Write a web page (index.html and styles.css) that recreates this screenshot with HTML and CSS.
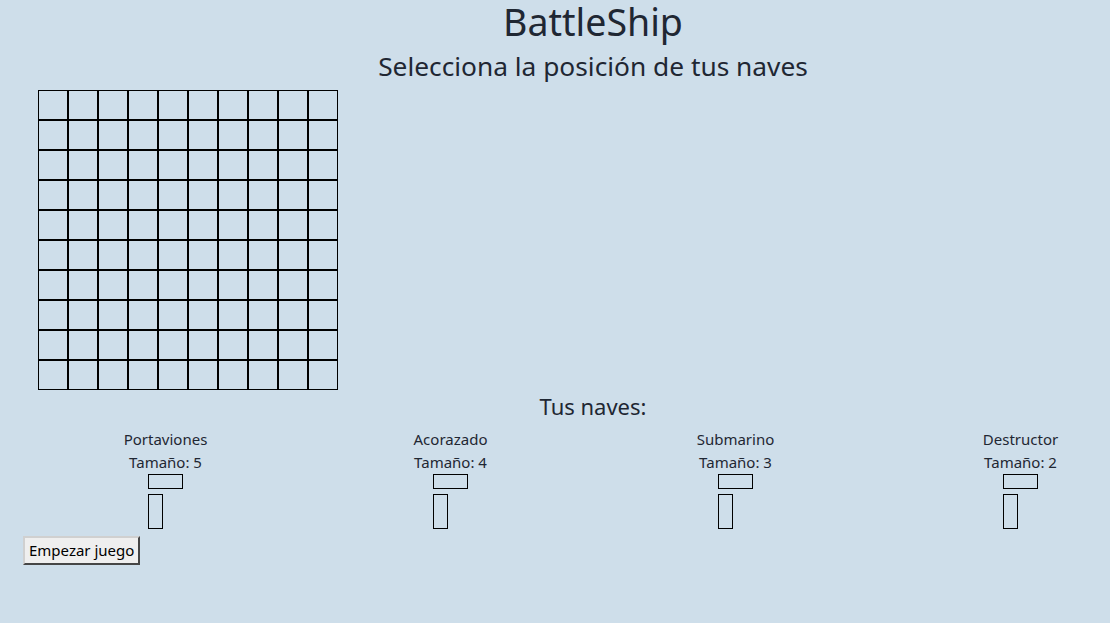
FILE: index.html
```html
<!DOCTYPE html>
<html lang="es">
<head>
    <meta charset="UTF-8">
    <meta name="viewport" content="width=device-width, initial-scale=1.0">
    <title>BattleShip</title>
    <link rel="stylesheet" href="styles.css">
</head>
<body>
    <h1 class="title">BattleShip</h1>
    <h2 class="subtitle">Selecciona la posición de tus naves</h2>

    <table class="board" id="board"></table>

    <h3 class="fleet-title">Tus naves:</h3>
    <div class="fleet">
        <div class="ship">
            <div class="ship-name">Portaviones</div>
            <div class="ship-size">Tamaño: 5</div>
            <div class="ship-shapes">
                <div class="shape shape-h"></div>
                <div class="shape shape-v"></div>
            </div>
        </div>
        <div class="ship">
            <div class="ship-name">Acorazado</div>
            <div class="ship-size">Tamaño: 4</div>
            <div class="ship-shapes">
                <div class="shape shape-h"></div>
                <div class="shape shape-v"></div>
            </div>
        </div>
        <div class="ship">
            <div class="ship-name">Submarino</div>
            <div class="ship-size">Tamaño: 3</div>
            <div class="ship-shapes">
                <div class="shape shape-h"></div>
                <div class="shape shape-v"></div>
            </div>
        </div>
        <div class="ship">
            <div class="ship-name">Destructor</div>
            <div class="ship-size">Tamaño: 2</div>
            <div class="ship-shapes">
                <div class="shape shape-h"></div>
                <div class="shape shape-v"></div>
            </div>
        </div>
    </div>

    <button class="btn-start">Empezar juego</button>

    <script>
        // Build the 10x10 board
        const board = document.getElementById('board');
        for (let r = 0; r < 10; r++) {
            const row = document.createElement('tr');
            for (let c = 0; c < 10; c++) {
                const cell = document.createElement('td');
                cell.dataset.row = r;
                cell.dataset.col = c;
                row.appendChild(cell);
            }
            board.appendChild(row);
        }
    </script>
</body>
</html>
```

FILE: styles.css
```css
* {
    margin: 0;
    padding: 0;
    box-sizing: border-box;
}

body {
    font-family: 'Noto Sans', 'Open Sans', sans-serif;
    background: #cedeea;
    color: #1f2733;
    min-height: 100vh;
    overflow: hidden;
}

.title,
.subtitle,
.fleet-title {
    font-weight: 400;
    text-align: center;
    padding-left: 76px;
}

.title {
    font-size: 37.5px;
    line-height: 44px;
}

.subtitle {
    font-size: 26.3px;
    line-height: 40px;
    padding-top: 2px;
}

.board {
    border-collapse: separate;
    border-spacing: 0;
    margin: 4px 0 0 38px;
}

.board td {
    width: 30px;
    height: 30px;
    border: 1px solid #000;
    padding: 0;
}

.fleet-title {
    font-size: 22px;
    line-height: 32px;
}

.fleet {
    display: grid;
    grid-template-columns: repeat(4, 285px);
    padding-left: 23px;
    padding-top: 5px;
}

.ship {
    display: flex;
    flex-direction: column;
    align-items: center;
    font-size: 15px;
}

.ship-name {
    line-height: 24px;
}

.ship-size {
    line-height: 22px;
}

.ship-shapes {
    width: 35px;
    margin-top: 1px;
    display: flex;
    flex-direction: column;
    gap: 5px;
}

.shape {
    border: 1px solid #000;
}

.shape-h {
    width: 35px;
    height: 15px;
}

.shape-v {
    width: 15px;
    height: 35px;
}

.btn-start {
    margin: 7px 0 0 23px;
    height: 29px;
    padding: 0 4px 2px;
    font-family: inherit;
    font-size: 15px;
    color: #000;
    background: #efefef;
    border: 2px outset #d0d0d0;
    border-right-color: #9a9a9a;
    border-bottom-color: #9a9a9a;
    cursor: pointer;
}
```
